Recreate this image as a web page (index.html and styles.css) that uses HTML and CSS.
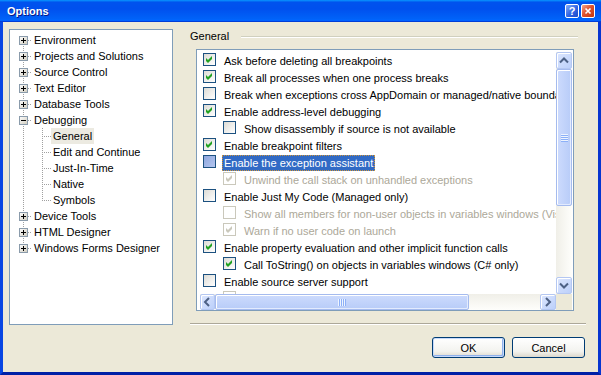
FILE: index.html
```html
<!DOCTYPE html>
<html lang="en">
<head>
  <meta charset="UTF-8" />
  <title>Options</title>
  <link rel="stylesheet" href="styles.css">
</head>
<body>
  <svg class="defs" width="0" height="0">
    <defs>
      <linearGradient id="expg" x1="0" y1="0" x2="1" y2="1">
        <stop offset="0" stop-color="#ffffff"/>
        <stop offset="1" stop-color="#cfcbbd"/>
      </linearGradient>
    </defs>
  </svg>

  <div class="window">
    <div class="titlebar">
      <span class="title">Options</span>
      <div class="caption-btns">
        <span class="cap-btn help">?</span>
        <span class="cap-btn close">
          <svg width="12" height="12" viewBox="0 0 12 12"><path d="M3 3l6 6M9 3l-6 6" stroke="#fff" stroke-width="2"/></svg>
        </span>
      </div>
    </div>

    <div class="client">
      <div class="main">
        <!-- дерево разделов -->
        <div class="tree">
          <div class="node first"><span class="ind"><svg class="exp" width="9" height="9"><rect x=".5" y=".5" width="8" height="8" fill="url(#expg)" stroke="#8a9bab"/><path d="M2 4.5h5M4.5 2v5" stroke="#000"/></svg></span><span class="label">Environment</span></div>
          <div class="node"><span class="ind"><svg class="exp" width="9" height="9"><rect x=".5" y=".5" width="8" height="8" fill="url(#expg)" stroke="#8a9bab"/><path d="M2 4.5h5M4.5 2v5" stroke="#000"/></svg></span><span class="label">Projects and Solutions</span></div>
          <div class="node"><span class="ind"><svg class="exp" width="9" height="9"><rect x=".5" y=".5" width="8" height="8" fill="url(#expg)" stroke="#8a9bab"/><path d="M2 4.5h5M4.5 2v5" stroke="#000"/></svg></span><span class="label">Source Control</span></div>
          <div class="node"><span class="ind"><svg class="exp" width="9" height="9"><rect x=".5" y=".5" width="8" height="8" fill="url(#expg)" stroke="#8a9bab"/><path d="M2 4.5h5M4.5 2v5" stroke="#000"/></svg></span><span class="label">Text Editor</span></div>
          <div class="node"><span class="ind"><svg class="exp" width="9" height="9"><rect x=".5" y=".5" width="8" height="8" fill="url(#expg)" stroke="#8a9bab"/><path d="M2 4.5h5M4.5 2v5" stroke="#000"/></svg></span><span class="label">Database Tools</span></div>
          <div class="node"><span class="ind"><svg class="exp" width="9" height="9"><rect x=".5" y=".5" width="8" height="8" fill="url(#expg)" stroke="#8a9bab"/><path d="M2 4.5h5" stroke="#000"/></svg></span><span class="label">Debugging</span></div>
          <div class="node child"><span class="ind"></span><span class="label sel">General</span></div>
          <div class="node child"><span class="ind"></span><span class="label">Edit and Continue</span></div>
          <div class="node child"><span class="ind"></span><span class="label">Just-In-Time</span></div>
          <div class="node child"><span class="ind"></span><span class="label">Native</span></div>
          <div class="node child last-child"><span class="ind"></span><span class="label">Symbols</span></div>
          <div class="node"><span class="ind"><svg class="exp" width="9" height="9"><rect x=".5" y=".5" width="8" height="8" fill="url(#expg)" stroke="#8a9bab"/><path d="M2 4.5h5M4.5 2v5" stroke="#000"/></svg></span><span class="label">Device Tools</span></div>
          <div class="node"><span class="ind"><svg class="exp" width="9" height="9"><rect x=".5" y=".5" width="8" height="8" fill="url(#expg)" stroke="#8a9bab"/><path d="M2 4.5h5M4.5 2v5" stroke="#000"/></svg></span><span class="label">HTML Designer</span></div>
          <div class="node last"><span class="ind"><svg class="exp" width="9" height="9"><rect x=".5" y=".5" width="8" height="8" fill="url(#expg)" stroke="#8a9bab"/><path d="M2 4.5h5M4.5 2v5" stroke="#000"/></svg></span><span class="label">Windows Forms Designer</span></div>
        </div>

        <!-- страница General -->
        <div class="page">
          <div class="group-title">General</div>
          <div class="listbox">
            <div class="items">
              <div class="item"><span class="cb"><svg viewBox="0 0 11 11"><path d="M2 4l2 2 4-4v3l-4 4-2-2z"/></svg></span><span class="label">Ask before deleting all breakpoints</span></div>
              <div class="item"><span class="cb"><svg viewBox="0 0 11 11"><path d="M2 4l2 2 4-4v3l-4 4-2-2z"/></svg></span><span class="label">Break all processes when one process breaks</span></div>
              <div class="item"><span class="cb"></span><span class="label">Break when exceptions cross AppDomain or managed/native boundaries</span></div>
              <div class="item"><span class="cb"><svg viewBox="0 0 11 11"><path d="M2 4l2 2 4-4v3l-4 4-2-2z"/></svg></span><span class="label">Enable address-level debugging</span></div>
              <div class="item sub"><span class="cb"></span><span class="label">Show disassembly if source is not available</span></div>
              <div class="item"><span class="cb"><svg viewBox="0 0 11 11"><path d="M2 4l2 2 4-4v3l-4 4-2-2z"/></svg></span><span class="label">Enable breakpoint filters</span></div>
              <div class="item"><span class="cb hot"></span><span class="label sel">Enable the exception assistant</span></div>
              <div class="item sub disabled"><span class="cb"><svg viewBox="0 0 11 11"><path d="M2 4l2 2 4-4v3l-4 4-2-2z"/></svg></span><span class="label">Unwind the call stack on unhandled exceptions</span></div>
              <div class="item"><span class="cb"></span><span class="label">Enable Just My Code (Managed only)</span></div>
              <div class="item sub disabled"><span class="cb"></span><span class="label">Show all members for non-user objects in variables windows (Visual Basic only)</span></div>
              <div class="item sub disabled"><span class="cb"><svg viewBox="0 0 11 11"><path d="M2 4l2 2 4-4v3l-4 4-2-2z"/></svg></span><span class="label">Warn if no user code on launch</span></div>
              <div class="item"><span class="cb"><svg viewBox="0 0 11 11"><path d="M2 4l2 2 4-4v3l-4 4-2-2z"/></svg></span><span class="label">Enable property evaluation and other implicit function calls</span></div>
              <div class="item sub"><span class="cb"><svg viewBox="0 0 11 11"><path d="M2 4l2 2 4-4v3l-4 4-2-2z"/></svg></span><span class="label">Call ToString() on objects in variables windows (C# only)</span></div>
              <div class="item"><span class="cb"></span><span class="label">Enable source server support</span></div>
              <div class="item sub disabled"><span class="cb"></span><span class="label">Print source server diagnostic messages to the Output window</span></div>
            </div>

            <div class="vscroll">
              <span class="sb-btn up"><svg width="14" height="15" viewBox="0 0 14 15"><path d="M3 9.5l4-4 4 4" fill="none" stroke="#4d6185" stroke-width="2"/></svg></span>
              <span class="thumb v"><span class="grip v"></span></span>
              <span class="track"></span>
              <span class="sb-btn down"><svg width="14" height="15" viewBox="0 0 14 15"><path d="M3 5.5l4 4 4-4" fill="none" stroke="#4d6185" stroke-width="2"/></svg></span>
            </div>
            <div class="hscroll">
              <span class="sb-btn left"><svg width="13" height="14" viewBox="0 0 13 14"><path d="M8 3l-4 4 4 4" fill="none" stroke="#4d6185" stroke-width="2"/></svg></span>
              <span class="thumb h"><span class="grip h"></span></span>
              <span class="track"></span>
              <span class="sb-btn right"><svg width="14" height="14" viewBox="0 0 14 14"><path d="M5 3l4 4-4 4" fill="none" stroke="#4d6185" stroke-width="2"/></svg></span>
            </div>
            <div class="corner"></div>
          </div>
          <div class="sep"></div>
        </div>
      </div>

      <div class="buttons">
        <button class="btn default">OK</button>
        <button class="btn">Cancel</button>
      </div>
    </div>
  </div>
</body>
</html>
```

FILE: styles.css
```css
* {
  box-sizing: border-box;
}
html, body {
  margin: 0;
}
body {
  width: 601px;
  height: 375px;
  overflow: hidden;
  background: #ece9d8;
  font-family: "Liberation Sans", Arial, sans-serif;
  font-size: 11px;
  color: #000;
}
.defs {
  position: absolute;
}
.window {
  display: flex;
  flex-direction: column;
  width: 601px;
  height: 375px;
}

/* Заголовок окна */
.titlebar {
  height: 22px;
  flex: none;
  display: flex;
  align-items: center;
  justify-content: space-between;
  padding: 0 6px 0 7px;
  background: linear-gradient(180deg, #0997ff, #0053ee 10%, #0050ee 40%, #0062f8 85%, #0066ff 92%, #005bff 95%, #003dd7 97%, #003dd7);
}
.title {
  color: #fff;
  font-weight: bold;
  font-size: 11px;
  text-shadow: 1px 1px #0a1883;
}
.caption-btns {
  display: flex;
  gap: 2px;
}
.cap-btn {
  width: 14px;
  height: 14px;
  border: 1px solid #fff;
  border-radius: 2px;
  display: flex;
  align-items: center;
  justify-content: center;
  color: #fff;
  font-weight: bold;
  font-size: 11px;
}
.cap-btn.help {
  background: linear-gradient(135deg, #8aaef7, #2f63e3 55%, #1d4bc9);
}
.cap-btn.close {
  background: linear-gradient(135deg, #f3a68c, #e0532f 45%, #c2360f);
}
.cap-btn.close svg {
  width: 10px;
  height: 10px;
}

.client {
  flex: 1;
  display: flex;
  flex-direction: column;
  padding: 7px 12px 14px 6px;
  background: #ece9d8;
  border: 3px solid #0735d0;
  border-top: 0;
  border-left-color: #0846e3;
  border-bottom-color: #0020a6;
}
.main {
  display: flex;
  height: 296px;
  gap: 17px;
}

/* Дерево */
.tree {
  width: 164px;
  border: 1px solid #7f9db9;
  background: #fff;
  padding-top: 2px;
}
.node {
  display: flex;
  height: 16px;
  line-height: 16px;
  white-space: nowrap;
}
.ind {
  flex: none;
  width: 22px;
  height: 16px;
  padding: 4px 0 0 9px;
  background:
    repeating-linear-gradient(to bottom, #a0a0a0 0 1px, transparent 1px 2px) 13px 0 / 1px 16px no-repeat,
    repeating-linear-gradient(to right, #a0a0a0 0 1px, transparent 1px 2px) 14px 8px / 8px 1px no-repeat;
}
.node.first .ind {
  background:
    repeating-linear-gradient(to bottom, #a0a0a0 0 1px, transparent 1px 2px) 13px 8px / 1px 8px no-repeat,
    repeating-linear-gradient(to right, #a0a0a0 0 1px, transparent 1px 2px) 14px 8px / 8px 1px no-repeat;
}
.node.last .ind {
  background:
    repeating-linear-gradient(to bottom, #a0a0a0 0 1px, transparent 1px 2px) 13px 0 / 1px 9px no-repeat,
    repeating-linear-gradient(to right, #a0a0a0 0 1px, transparent 1px 2px) 14px 8px / 8px 1px no-repeat;
}
.node.child .ind {
  width: 41px;
  background:
    repeating-linear-gradient(to bottom, #a0a0a0 0 1px, transparent 1px 2px) 13px 0 / 1px 16px no-repeat,
    repeating-linear-gradient(to bottom, #a0a0a0 0 1px, transparent 1px 2px) 32px 0 / 1px 16px no-repeat,
    repeating-linear-gradient(to right, #a0a0a0 0 1px, transparent 1px 2px) 34px 8px / 7px 1px no-repeat;
}
.node.last-child .ind {
  background:
    repeating-linear-gradient(to bottom, #a0a0a0 0 1px, transparent 1px 2px) 13px 0 / 1px 16px no-repeat,
    repeating-linear-gradient(to bottom, #a0a0a0 0 1px, transparent 1px 2px) 32px 0 / 1px 9px no-repeat,
    repeating-linear-gradient(to right, #a0a0a0 0 1px, transparent 1px 2px) 34px 8px / 7px 1px no-repeat;
}
.exp {
  display: block;
  shape-rendering: crispEdges;
}
.node .label {
  padding: 0 2px;
}
.node .label.sel {
  background: #eceae1;
}

/* Страница */
.page {
  flex: 1;
  display: flex;
  flex-direction: column;
}
.group-title {
  display: flex;
  align-items: center;
  height: 15px;
  line-height: 15px;
}
.group-title::after {
  content: '';
  flex: 1;
  border-top: 1px solid #d0d0bf;
  border-bottom: 1px solid #fff;
  margin: 0 8px 0 12px;
}
.listbox {
  margin: 5px 0 0 6px;
  width: 378px;
  height: 262px;
  border: 1px solid #7f9db9;
  background: #fff;
  padding: 2px 1px 0 3px;
  display: grid;
  grid-template-columns: 356px 16px;
  grid-template-rows: 242px 16px;
}
.items {
  overflow: hidden;
  padding-left: 3px;
}
.item {
  display: flex;
  align-items: center;
  height: 17px;
  white-space: nowrap;
}
.item.sub {
  padding-left: 20px;
}
.cb {
  flex: none;
  width: 13px;
  height: 13px;
  margin: 0 6px 2px 0;
  border: 1px solid #1c5180;
  background: linear-gradient(135deg, #dcdbd5, #fff);
}
.cb svg {
  display: block;
  width: 11px;
  height: 11px;
  fill: #21a121;
}
.cb.hot {
  background: linear-gradient(135deg, #8ea6dd, #b4c6ef);
}
.item .label {
  border: 1px dotted transparent;
  padding: 0 1px;
  line-height: 14px;
}
.item .label.sel {
  background: #316ac5;
  color: #fff;
  border-color: #ce953a;
}
.item.disabled .label {
  color: #aca899;
}
.item.disabled .cb {
  border-color: #cac8bb;
  background: #fff;
}
.item.disabled .cb svg {
  fill: #cac8bb;
}

/* Полосы прокрутки */
.vscroll {
  display: flex;
  flex-direction: column;
  background: linear-gradient(to right, #f0efe8, #fefefb);
}
.hscroll {
  display: flex;
  background: linear-gradient(to bottom, #f0efe8, #fefefb);
}
.sb-btn {
  flex: none;
  display: flex;
  align-items: center;
  justify-content: center;
  border: 1px solid #b4c7f2;
  border-radius: 2px;
  background: linear-gradient(135deg, #dce6fe, #bcd0fa);
  box-shadow: inset 1px 1px #fff;
}
.vscroll .sb-btn {
  height: 17px;
}
.hscroll .sb-btn {
  width: 15px;
}
.hscroll .sb-btn.right {
  width: 16px;
}
.thumb {
  flex: none;
  display: flex;
  align-items: center;
  justify-content: center;
  border: 1px solid #a5bbee;
  border-radius: 2px;
  box-shadow: inset 1px 1px #fff, inset -1px -1px #e3ebfe;
}
.thumb.v {
  height: 137px;
  background: linear-gradient(to right, #cddbfd, #b8ccf8);
}
.thumb.h {
  width: 254px;
  background: linear-gradient(to bottom, #cddbfd, #b8ccf8);
}
.grip.v {
  width: 7px;
  height: 8px;
  background: repeating-linear-gradient(to bottom, #eef4fe 0 1px, #8cb0f8 1px 2px);
}
.grip.h {
  width: 8px;
  height: 7px;
  background: repeating-linear-gradient(to right, #eef4fe 0 1px, #8cb0f8 1px 2px);
}
.track {
  flex: 1;
}
.corner {
  background: #ece9d8;
}
.sep {
  margin-top: 12px;
  height: 2px;
  border-top: 1px solid #aca899;
  border-bottom: 1px solid #fff;
}

/* Кнопки */
.buttons {
  display: flex;
  justify-content: flex-end;
  gap: 7px;
  margin-top: 12px;
  padding-right: 1px;
}
.btn {
  width: 73px;
  height: 21px;
  padding: 0;
  font-family: "Liberation Sans", Arial, sans-serif;
  font-size: 11px;
  color: #000;
  border: 1px solid #003c74;
  border-radius: 3px;
  background: linear-gradient(180deg, #fff, #f3f3ef 70%, #dcd8cc);
}
.btn.default {
  box-shadow: inset 0 0 0 1px #c6d9fb, inset -1px -1px 0 1px #8fb1ec;
}
```
